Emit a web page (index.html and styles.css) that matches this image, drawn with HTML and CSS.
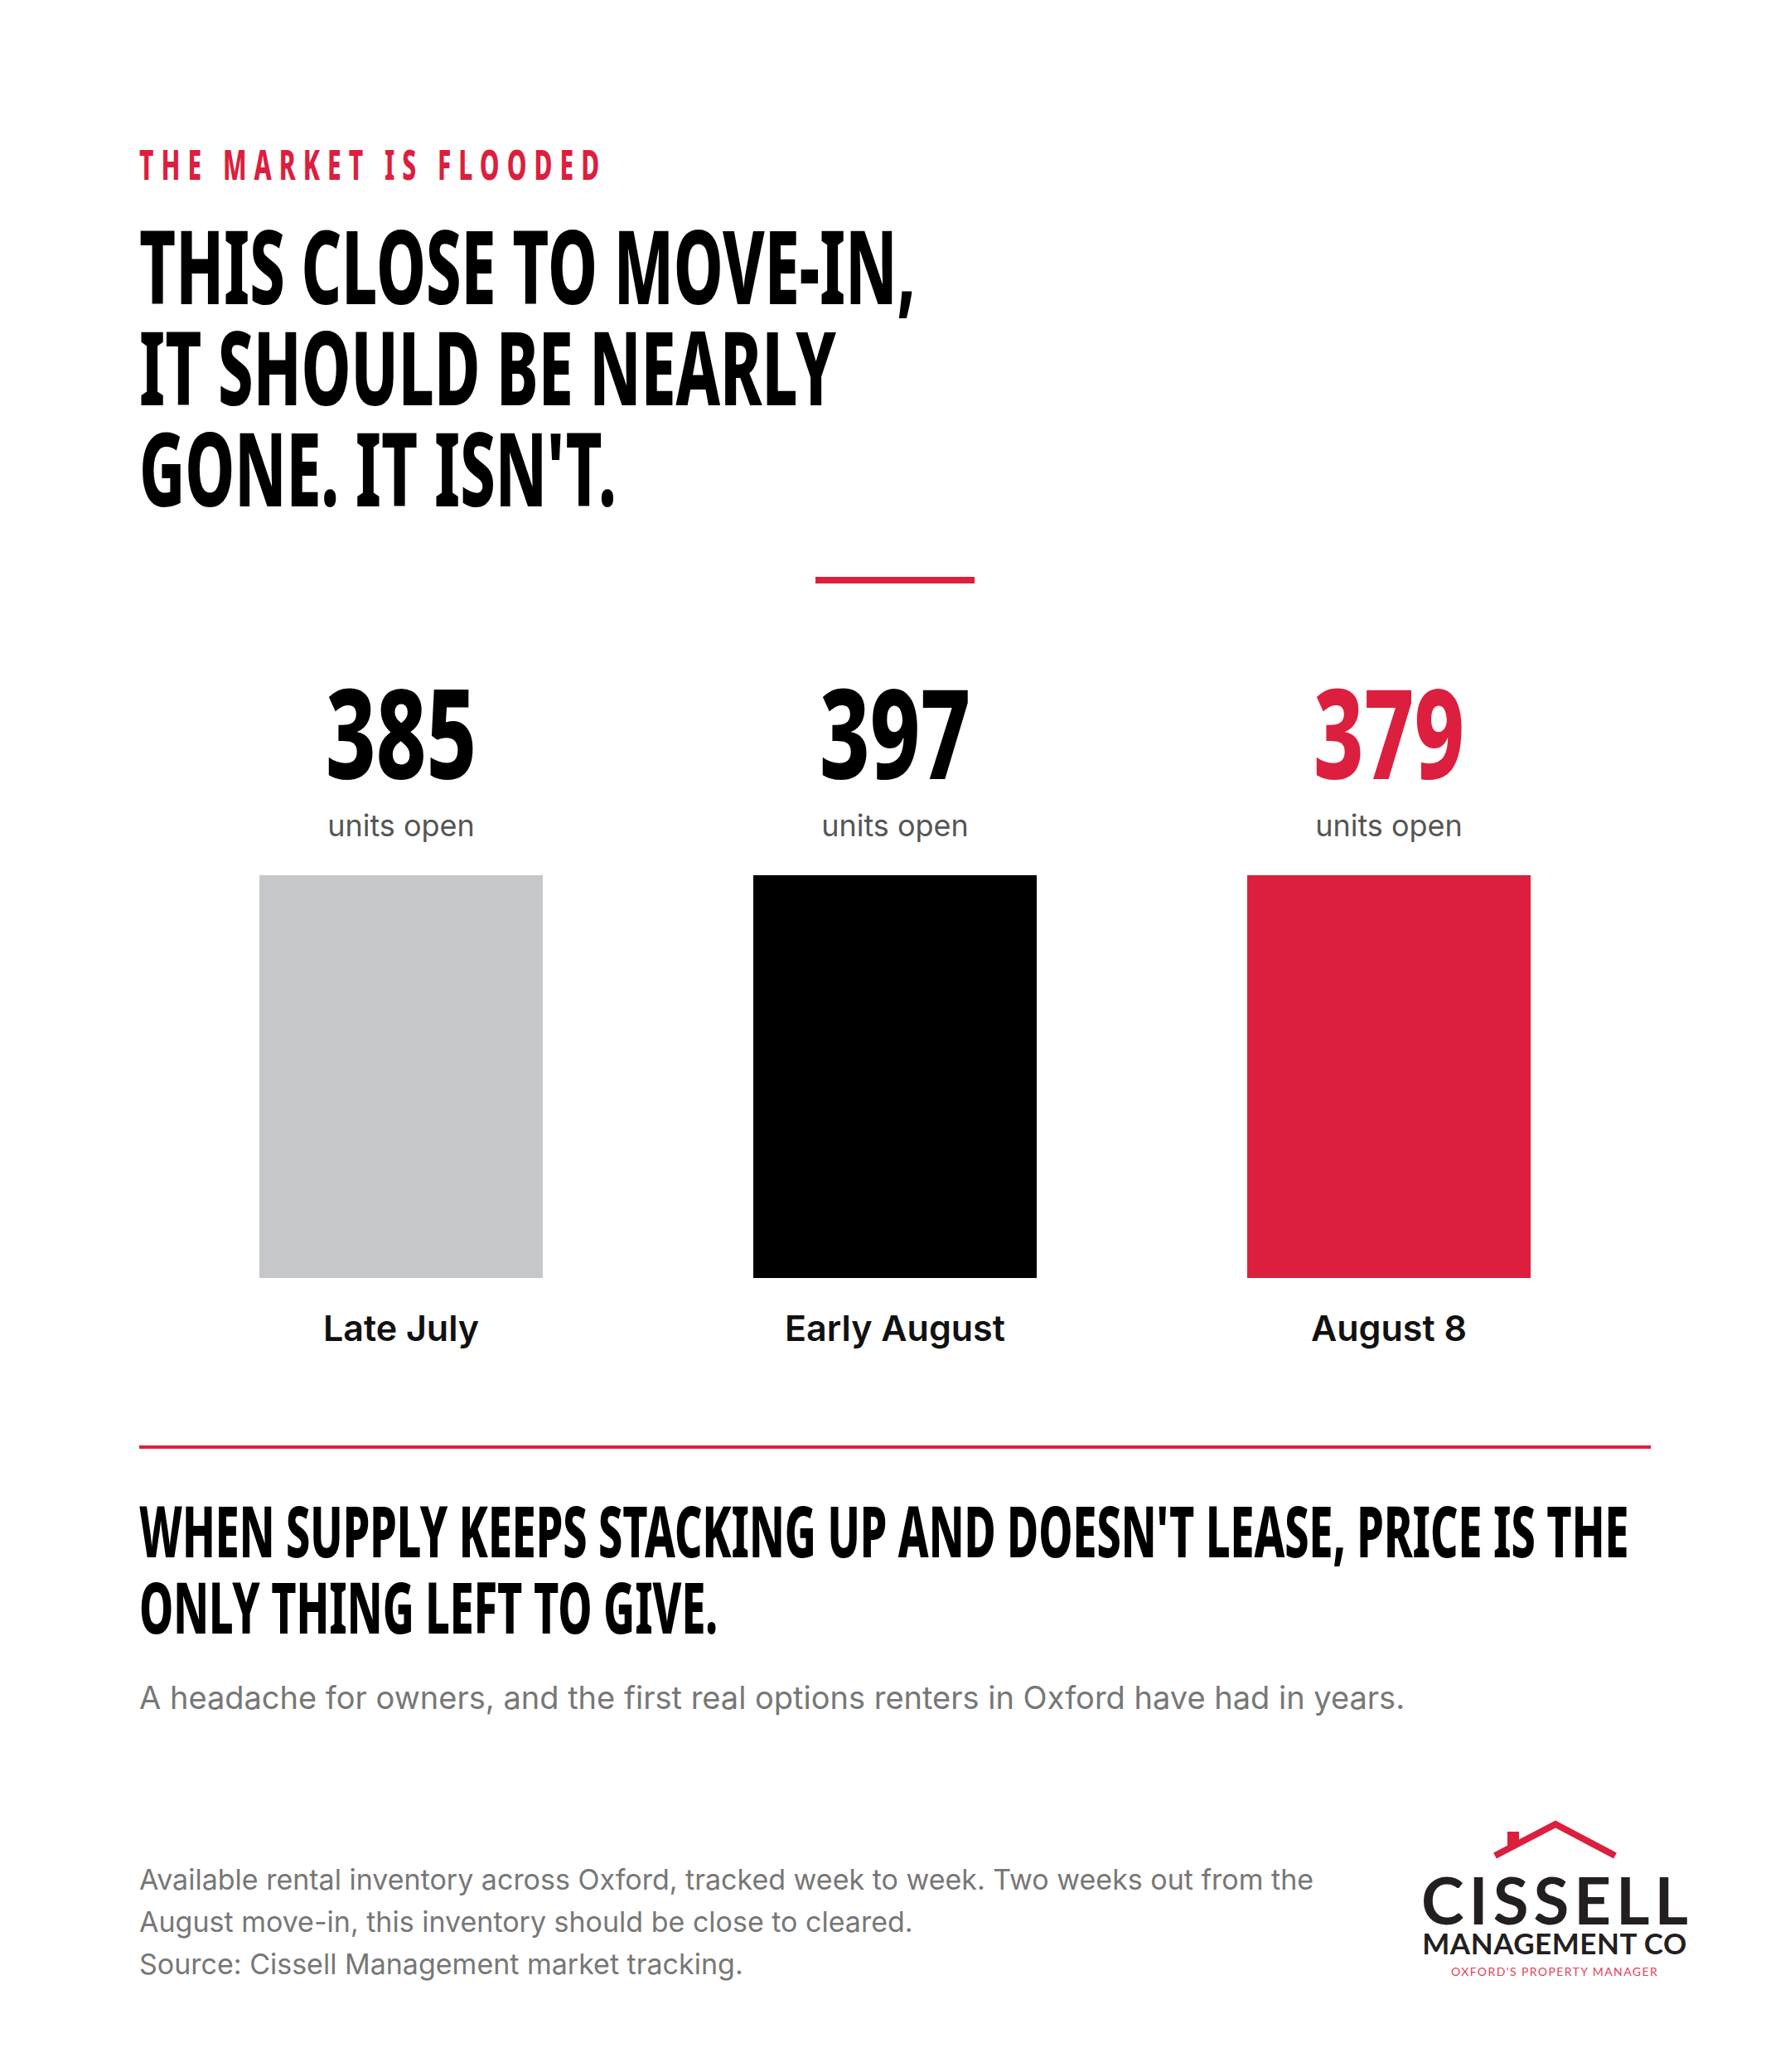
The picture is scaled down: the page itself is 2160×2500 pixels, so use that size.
FILE: index.html
```html
<!DOCTYPE html>
<html lang="en">
<head>
<meta charset="utf-8">
<title>The Market Is Flooded</title>
<link rel="stylesheet" href="styles.css">
</head>
<body>
<main class="page">
  <p class="eyebrow">THE MARKET IS FLOODED</p>
  <h1 class="headline">THIS CLOSE TO MOVE-IN,<br>IT SHOULD BE NEARLY<br>GONE. IT ISN'T.</h1>
  <div class="divider-short"></div>

  <section class="chart">
    <div class="col">
      <div class="num">385</div>
      <div class="unit">units open</div>
      <div class="bar bar-gray"></div>
      <div class="label">Late July</div>
    </div>
    <div class="col">
      <div class="num">397</div>
      <div class="unit">units open</div>
      <div class="bar bar-black"></div>
      <div class="label">Early August</div>
    </div>
    <div class="col">
      <div class="num num-red">379</div>
      <div class="unit">units open</div>
      <div class="bar bar-red"></div>
      <div class="label">August 8</div>
    </div>
  </section>

  <div class="divider-long"></div>

  <h2 class="takeaway">WHEN SUPPLY KEEPS STACKING UP AND DOESN'T LEASE, PRICE IS THE<br>ONLY THING LEFT TO GIVE.</h2>
  <p class="sub">A headache for owners, and the first real options renters in Oxford have had in years.</p>

  <footer class="footer">
    <p class="note">Available rental inventory across Oxford, tracked week to week. Two weeks out from the August move-in, this inventory should be close to cleared.<br>Source: Cissell Management market tracking.</p>
    <div class="logo">
      <svg class="logo-roof" width="160" height="52" viewBox="0 0 160 52" aria-hidden="true">
        <rect x="23" y="18" width="14" height="18" fill="#dc1f3e"/>
        <polyline points="8,47 81,9 153,47" fill="none" stroke="#dc1f3e" stroke-width="8" stroke-linejoin="miter" stroke-linecap="butt"/>
      </svg>
      <div class="logo-name">CISSELL</div>
      <div class="logo-sub">MANAGEMENT CO</div>
      <div class="logo-tag">OXFORD'S PROPERTY MANAGER</div>
    </div>
  </footer>
</main>
</body>
</html>
```
FILE: styles.css
```css
body {
  margin: 0;
  background: #ffffff;
  color: #000000;
  font-family: "Inter", "Noto Sans", sans-serif;
}

.page {
  padding: 173px 168px 100px;
}

/* Condensed display face: Noto Sans ExtraBold narrowed horizontally */
.eyebrow,
.headline,
.num,
.takeaway {
  font-family: "Noto Sans", "DejaVu Sans", sans-serif;
  font-weight: 800;
  white-space: nowrap;
}

.eyebrow {
  margin: 0;
  font-size: 50px;
  line-height: 50px;
  letter-spacing: 15px;
  color: #dc1f3e;
  transform: scaleX(0.6);
  transform-origin: left top;
}

.headline {
  margin: 36px 0 0;
  font-size: 123px;
  line-height: 122px;
  color: #000;
  transform: scaleX(0.615);
  transform-origin: left top;
}

.divider-short {
  width: 192px;
  height: 8px;
  margin: 71px auto 0;
  background: #dc1f3e;
}

.chart {
  display: grid;
  grid-template-columns: repeat(3, 596px);
  justify-content: center;
  margin-top: 103px;
}

.col {
  display: flex;
  flex-direction: column;
  align-items: center;
}

.num {
  font-size: 150px;
  line-height: 150px;
  color: #000;
  transform: scaleX(0.7);
  transform-origin: center top;
}

.num-red {
  color: #dc1f3e;
}

.unit {
  margin-top: 17px;
  font-size: 36px;
  line-height: 44px;
  color: #555555;
}

.bar {
  width: 342px;
  height: 486px;
  margin-top: 38px;
}

.bar-gray { background: #c6c7c9; }
.bar-black { background: #000000; }
.bar-red { background: #dc1f3e; }

.label {
  margin-top: 34px;
  font-size: 43px;
  line-height: 52px;
  font-weight: 600;
  color: #111111;
}

.divider-long {
  height: 4px;
  margin-top: 116px;
  background: #dc1f3e;
}

.takeaway {
  margin: 52px 0 0;
  font-size: 85px;
  line-height: 92px;
  color: #000;
  transform: scaleX(0.612);
  transform-origin: left top;
}

.sub {
  margin: 41px 0 0;
  font-size: 38px;
  line-height: 46px;
  color: #777777;
}

.footer {
  display: flex;
  justify-content: space-between;
  align-items: flex-start;
  margin-top: 121px;
}

.note {
  margin: 50px 0 0;
  max-width: 1500px;
  font-size: 34px;
  line-height: 51px;
  color: #777777;
}

.logo {
  display: flex;
  flex-direction: column;
  align-items: center;
  width: 316px;
  margin-right: -42px;
  font-family: "Lato", "Inter", sans-serif;
}

.logo-roof {
  display: block;
}

.logo-name {
  margin-top: 18px;
  font-size: 78px;
  line-height: 60px;
  font-weight: 700;
  letter-spacing: 6px;
  margin-right: -6px;
  color: #231f20;
  white-space: nowrap;
}

.logo-sub {
  margin-top: 7px;
  font-size: 35px;
  line-height: 30px;
  font-weight: 700;
  letter-spacing: 0.5px;
  color: #231f20;
  white-space: nowrap;
}

.logo-tag {
  margin-top: 13px;
  font-size: 14px;
  line-height: 14px;
  letter-spacing: 1.4px;
  color: #e0415a;
  white-space: nowrap;
}
```
